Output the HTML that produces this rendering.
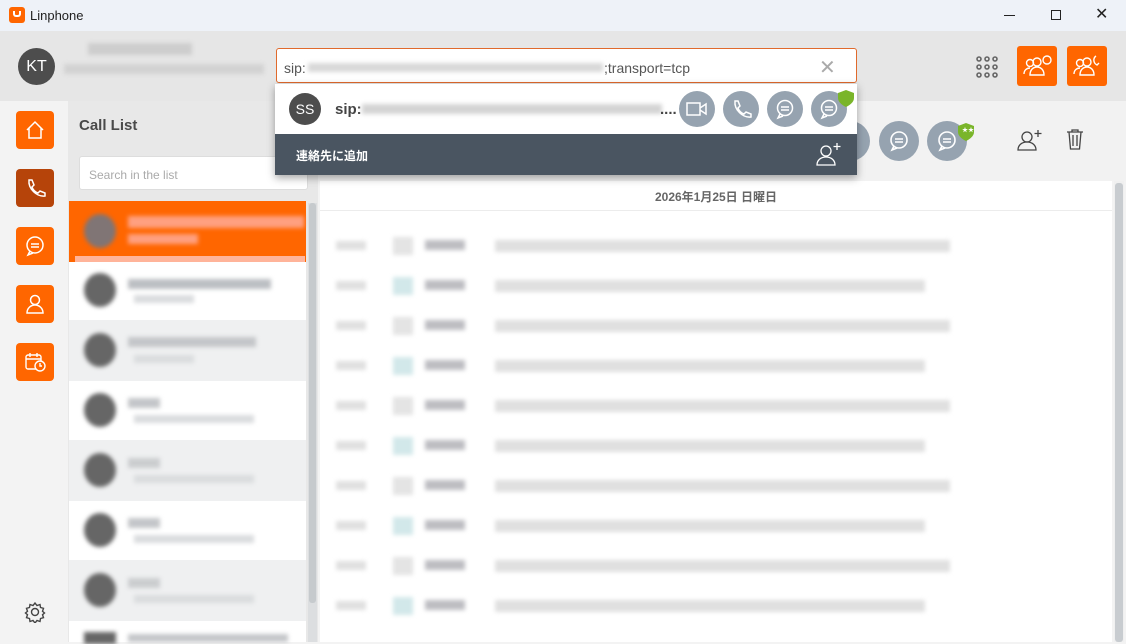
<!DOCTYPE html>
<html><head><meta charset="utf-8"><style>
*{margin:0;padding:0;box-sizing:border-box}
body{width:1126px;height:642px;overflow:hidden;font-family:"Liberation Sans","Noto Sans CJK JP",sans-serif;background:#f3f3f3;position:relative}
.a{position:absolute}
.blur{filter:blur(2px)}
.nb{position:absolute;left:16px;width:38px;height:38px;border-radius:4px;background:#ff6600;display:flex;align-items:center;justify-content:center}
.circ{position:absolute;border-radius:50%;background:#96a3b0;display:flex;align-items:center;justify-content:center}
</style></head><body>
<div class="a" style="left:0;top:0;width:1126px;height:31px;background:#eef2f8"></div>
<div class="a" style="left:9px;top:7px;width:16px;height:16px;background:#ff6600;border-radius:3px"></div>
<div class="a" style="left:13px;top:11px;width:8px;height:6px;border:2px solid #fff;border-top:none;border-radius:0 0 3px 3px"></div>
<div class="a" style="left:30px;top:8px;font-size:13px;color:#222">Linphone</div>
<div class="a" style="left:1004px;top:15px;width:11px;height:1px;background:#222"></div>
<div class="a" style="left:1051px;top:10px;width:10px;height:10px;border:1px solid #222"></div>
<div class="a" style="left:1095px;top:4px;font-size:16px;color:#222">✕</div>
<div class="a" style="left:0;top:31px;width:1126px;height:70px;background:#e6e6e6"></div>
<div class="a" style="left:18px;top:48px;width:37px;height:37px;border-radius:50%;background:#4d4d4d;color:#fff;font-size:16px;text-align:center;line-height:37px">KT</div>
<div class="a blur" style="left:88px;top:43px;width:104px;height:12px;background:#cdcdcd"></div>
<div class="a blur" style="left:64px;top:64px;width:200px;height:10px;background:#d2d2d2"></div>
<svg class="a" style="left:976px;top:56px" width="22" height="22"><g fill="none" stroke="#666" stroke-width="1.6"><circle cx="3" cy="3" r="2"/><circle cx="11" cy="3" r="2"/><circle cx="19" cy="3" r="2"/><circle cx="3" cy="11" r="2"/><circle cx="11" cy="11" r="2"/><circle cx="19" cy="11" r="2"/><circle cx="3" cy="19" r="2"/><circle cx="11" cy="19" r="2"/><circle cx="19" cy="19" r="2"/></g></svg>
<div class="a" style="left:1017px;top:46px;width:40px;height:40px;background:#ff6600;border-radius:3px"></div>
<div class="a" style="left:1067px;top:46px;width:40px;height:40px;background:#ff6600;border-radius:3px"></div>
<svg class="a" style="left:1022px;top:54px" width="32" height="24"><g fill="none" stroke="#fff" stroke-width="1.4"><circle cx="8" cy="9" r="3.5"/><circle cx="15" cy="8" r="4"/><path d="M2 20c0-4 3-6 6-6M8 21c0-5 3-8 7-8s7 3 7 8z"/><circle cx="25" cy="6" r="4"/></g></svg>
<svg class="a" style="left:1072px;top:54px" width="32" height="24"><g fill="none" stroke="#fff" stroke-width="1.4"><circle cx="8" cy="9" r="3.5"/><circle cx="15" cy="8" r="4"/><path d="M2 20c0-4 3-6 6-6M8 21c0-5 3-8 7-8s7 3 7 8z"/><path d="M24 2c-3 2-3 7 1 9l2-2"/></g></svg>
<div class="a" style="left:0;top:101px;width:68px;height:541px;background:#f3f3f3"></div>
<div class="nb" style="top:111px"><svg width="22" height="22" fill="none" stroke="#fff" stroke-width="1.5"><path d="M3 11L11 3l8 8M5 9v10h12V9"/></svg></div>
<div class="nb" style="top:169px;background:#b6440a"><svg width="22" height="22" fill="none" stroke="#fff" stroke-width="1.5"><path d="M5 3l3 0 2 5-2 2c1 3 3 5 6 6l2-2 5 2v3c-8 1-17-7-16-16z"/></svg></div>
<div class="nb" style="top:227px"><svg width="22" height="22" fill="none" stroke="#fff" stroke-width="1.5"><circle cx="11" cy="10" r="8"/><path d="M7 9h8M7 12h8M6 16l-2 4 5-2"/></svg></div>
<div class="nb" style="top:285px"><svg width="22" height="22" fill="none" stroke="#fff" stroke-width="1.5"><circle cx="11" cy="7" r="4.5"/><path d="M3 20c0-5 4-8 8-8s8 3 8 8z"/></svg></div>
<div class="nb" style="top:343px"><svg width="22" height="22" fill="none" stroke="#fff" stroke-width="1.4"><rect x="2" y="4" width="15" height="14" rx="2"/><path d="M2 8h15M6 2v4M13 2v4"/><circle cx="16" cy="15" r="5" fill="#ff6600"/><path d="M16 12v3h2"/></svg></div>
<svg class="a" style="left:24px;top:601px" width="22" height="22" fill="none" stroke="#444" stroke-width="1.4"><circle cx="11" cy="11" r="3.5"/><path d="M11 2l2 2.5 3-1 .5 3 3 .8-1 3 2 1.7-2 1.7 1 3-3 .8-.5 3-3-1-2 2.5-2-2.5-3 1-.5-3-3-.8 1-3-2-1.7 2-1.7-1-3 3-.8.5-3 3 1z"/></svg>
<div class="a" style="left:68px;top:101px;width:250px;height:541px;background:#e8e8e8"></div>
<div class="a" style="left:79px;top:117px;font-size:15px;font-weight:bold;color:#4a4a4a">Call List</div>
<div class="a" style="left:79px;top:156px;width:229px;height:34px;background:#fff;border:1px solid #ddd;border-radius:3px;font-size:12px;color:#aaa;padding:11px 9px">Search in the list</div>
<div class="a" style="left:69px;top:201px;width:237px;height:61px;background:#ff6600"></div>
<div class="a" style="left:75px;top:256px;width:230px;height:6px;background:#ffb49a"></div>
<div class="a" style="left:69px;top:262px;width:237px;height:58px;background:#fff"></div>
<div class="a" style="left:69px;top:320px;width:237px;height:61px;background:#eff0f1"></div>
<div class="a" style="left:69px;top:381px;width:237px;height:59px;background:#fff"></div>
<div class="a" style="left:69px;top:440px;width:237px;height:61px;background:#eff0f1"></div>
<div class="a" style="left:69px;top:501px;width:237px;height:59px;background:#fff"></div>
<div class="a" style="left:69px;top:560px;width:237px;height:61px;background:#eff0f1"></div>
<div class="a" style="left:69px;top:621px;width:237px;height:21px;background:#fff"></div>
<div class="a" style="left:308px;top:203px;width:9px;height:439px;background:#dcdee0"></div>
<div class="a" style="left:309px;top:203px;width:7px;height:400px;background:#c6cacd;border-radius:3px"></div>
<div class="a blur" style="left:84px;top:214px;width:32px;height:34px;border-radius:50%;background:#807575"></div>
<div class="a blur" style="left:128px;top:216px;width:176px;height:12px;background:#ffa080"></div>
<div class="a blur" style="left:128px;top:234px;width:70px;height:10px;background:#ffa080"></div>
<div class="a blur" style="left:84px;top:273px;width:32px;height:34px;border-radius:50%;background:#666"></div>
<div class="a blur" style="left:128px;top:279px;width:143px;height:10px;background:#bcbfc3"></div>
<div class="a blur" style="left:134px;top:295px;width:60px;height:8px;background:#dadcde"></div>
<div class="a blur" style="left:84px;top:333px;width:32px;height:34px;border-radius:50%;background:#666"></div>
<div class="a blur" style="left:128px;top:337px;width:128px;height:10px;background:#c4c6c9"></div>
<div class="a blur" style="left:134px;top:355px;width:60px;height:8px;background:#dadcde"></div>
<div class="a blur" style="left:84px;top:393px;width:32px;height:34px;border-radius:50%;background:#666"></div>
<div class="a blur" style="left:128px;top:398px;width:32px;height:10px;background:#c4c6c9"></div>
<div class="a blur" style="left:134px;top:415px;width:120px;height:8px;background:#dadcde"></div>
<div class="a blur" style="left:84px;top:453px;width:32px;height:34px;border-radius:50%;background:#666"></div>
<div class="a blur" style="left:128px;top:458px;width:32px;height:10px;background:#cbcdcf"></div>
<div class="a blur" style="left:134px;top:475px;width:120px;height:8px;background:#dadcde"></div>
<div class="a blur" style="left:84px;top:513px;width:32px;height:34px;border-radius:50%;background:#666"></div>
<div class="a blur" style="left:128px;top:518px;width:32px;height:10px;background:#c4c6c9"></div>
<div class="a blur" style="left:134px;top:535px;width:120px;height:8px;background:#dadcde"></div>
<div class="a blur" style="left:84px;top:573px;width:32px;height:34px;border-radius:50%;background:#666"></div>
<div class="a blur" style="left:128px;top:578px;width:32px;height:10px;background:#cbcdcf"></div>
<div class="a blur" style="left:134px;top:595px;width:120px;height:8px;background:#dadcde"></div>
<div class="a blur" style="left:84px;top:632px;width:32px;height:12px;background:#666"></div>
<div class="a blur" style="left:128px;top:634px;width:160px;height:8px;background:#c4c6c9"></div>
<div class="a" style="left:318px;top:101px;width:808px;height:80px;background:#f2f2f2"></div>
<div class="circ" style="left:830px;top:121px;width:40px;height:40px"></div>
<div class="circ" style="left:879px;top:121px;width:40px;height:40px"><svg width="24" height="24" fill="none" stroke="#fff" stroke-width="1.6"><circle cx="12" cy="11" r="8"/><path d="M8 10h8M8 13h8M7 17l-2 4 5-2"/></svg></div>
<div class="circ" style="left:927px;top:121px;width:40px;height:40px"><svg width="24" height="24" fill="none" stroke="#fff" stroke-width="1.6"><circle cx="12" cy="11" r="8"/><path d="M8 10h8M8 13h8M7 17l-2 4 5-2"/></svg></div>
<svg class="a" style="left:957px;top:123px" width="18" height="18"><path d="M9 0l8 3v6c0 4-4 7-8 9-4-2-8-5-8-9V3z" fill="#7ab52a"/><text x="5" y="9" font-size="6" fill="#fff">★★</text></svg>
<svg class="a" style="left:1016px;top:128px" width="28" height="24" fill="none" stroke="#444" stroke-width="1.3"><circle cx="11" cy="9" r="5"/><path d="M2 22c0-5 4-8 9-8s9 3 9 8z"/><path d="M22 2v7M18.5 5.5h7"/></svg>
<svg class="a" style="left:1065px;top:128px" width="20" height="24" fill="none" stroke="#444" stroke-width="1.3"><path d="M2 4h16M7 4V2h6v2M4 4l1.5 17h9L16 4M8 7v11M12 7v11"/></svg>
<div class="a" style="left:320px;top:181px;width:792px;height:461px;background:#fff"></div>
<div class="a" style="left:1114px;top:181px;width:10px;height:461px;background:#f0f0f0"></div>
<div class="a" style="left:1115px;top:183px;width:8px;height:459px;background:#c8ccd0;border-radius:3px"></div>
<div class="a" style="left:320px;top:210px;width:792px;height:1px;background:#ececec"></div>
<div class="a" style="left:318px;top:188px;width:796px;text-align:center;font-size:12px;font-weight:bold;color:#666">2026年1月25日 日曜日</div>
<div id="rows"></div>
<div class="a" style="left:276px;top:48px;width:581px;height:35px;background:#fff;border:1px solid #e06a2c;border-radius:3px"></div>
<div class="a" style="left:284px;top:60px;font-size:14px;color:#555">sip:</div>
<div class="a blur" style="left:308px;top:63px;width:295px;height:9px;background:#d8d8d8"></div>
<div class="a" style="left:604px;top:60px;font-size:14px;color:#555">;transport=tcp</div>
<div class="a" style="left:819px;top:55px;font-size:20px;color:#aaa">✕</div>
<div class="a" style="left:275px;top:84px;width:582px;height:91px;box-shadow:0 3px 8px rgba(0,0,0,.35)"></div>
<div class="a" style="left:275px;top:84px;width:582px;height:50px;background:#fff"></div>
<div class="a" style="left:289px;top:93px;width:32px;height:32px;border-radius:50%;background:#4d4d4d;color:#fff;font-size:14px;text-align:center;line-height:32px">SS</div>
<div class="a" style="left:335px;top:101px;font-size:15px;font-weight:bold;color:#444">sip:</div>
<div class="a blur" style="left:362px;top:104px;width:300px;height:10px;background:#d4d4d4"></div>
<div class="a" style="left:660px;top:101px;font-size:15px;font-weight:bold;color:#444">....</div>
<div class="circ" style="left:679px;top:91px;width:36px;height:36px"><svg width="22" height="16" fill="none" stroke="#fff" stroke-width="1.5"><rect x="1" y="2" width="13" height="12"/><path d="M14 7l6-4v10l-6-4"/></svg></div>
<div class="circ" style="left:723px;top:91px;width:36px;height:36px"><svg width="22" height="22" fill="none" stroke="#fff" stroke-width="1.5"><path d="M5 3l3 0 2 5-2 2c1 3 3 5 6 6l2-2 5 2v3c-8 1-17-7-16-16z"/></svg></div>
<div class="circ" style="left:767px;top:91px;width:36px;height:36px"><svg width="22" height="22" fill="none" stroke="#fff" stroke-width="1.5"><circle cx="11" cy="10" r="7.5"/><path d="M7 9h8M7 12h8M6 16l-2 4 5-2"/></svg></div>
<div class="circ" style="left:811px;top:91px;width:36px;height:36px"><svg width="22" height="22" fill="none" stroke="#fff" stroke-width="1.5"><circle cx="11" cy="10" r="7.5"/><path d="M7 9h8M7 12h8M6 16l-2 4 5-2"/></svg></div>
<svg class="a" style="left:838px;top:90px" width="16" height="18"><path d="M8 0l8 3v5c0 4-4 7-8 9-4-2-8-5-8-9V3z" fill="#7ab52a"/></svg>
<div class="a" style="left:275px;top:134px;width:582px;height:41px;background:#4a5561"></div>
<div class="a" style="left:296px;top:147px;font-size:12px;font-weight:bold;color:#fff">連絡先に追加</div>
<svg class="a" style="left:815px;top:141px" width="28" height="26" fill="none" stroke="#fff" stroke-width="1.3"><circle cx="11" cy="10" r="5"/><path d="M2 24c0-5 4-8 9-8s9 3 9 8z"/><path d="M22 2v7M18.5 5.5h7"/></svg>
<script>
var h='';for(var k=0;k<10;k++){var y=245+k*40,w=k%2?430:455,t=k%2;
h+='<div class="a blur" style="left:336px;top:'+(y-4)+'px;width:30px;height:9px;background:#e0e0e0"></div>';
h+='<div class="a blur" style="left:393px;top:'+(y-8)+'px;width:20px;height:18px;background:'+(t?'#d2e8ea':'#e4e4e4')+'"></div>';
h+='<div class="a blur" style="left:425px;top:'+(y-5)+'px;width:40px;height:10px;background:#bdbdc2"></div>';
h+='<div class="a blur" style="left:495px;top:'+(y-5)+'px;width:'+w+'px;height:12px;background:#e0e0e0"></div>';}
document.getElementById('rows').innerHTML=h;
</script>
</body></html>
